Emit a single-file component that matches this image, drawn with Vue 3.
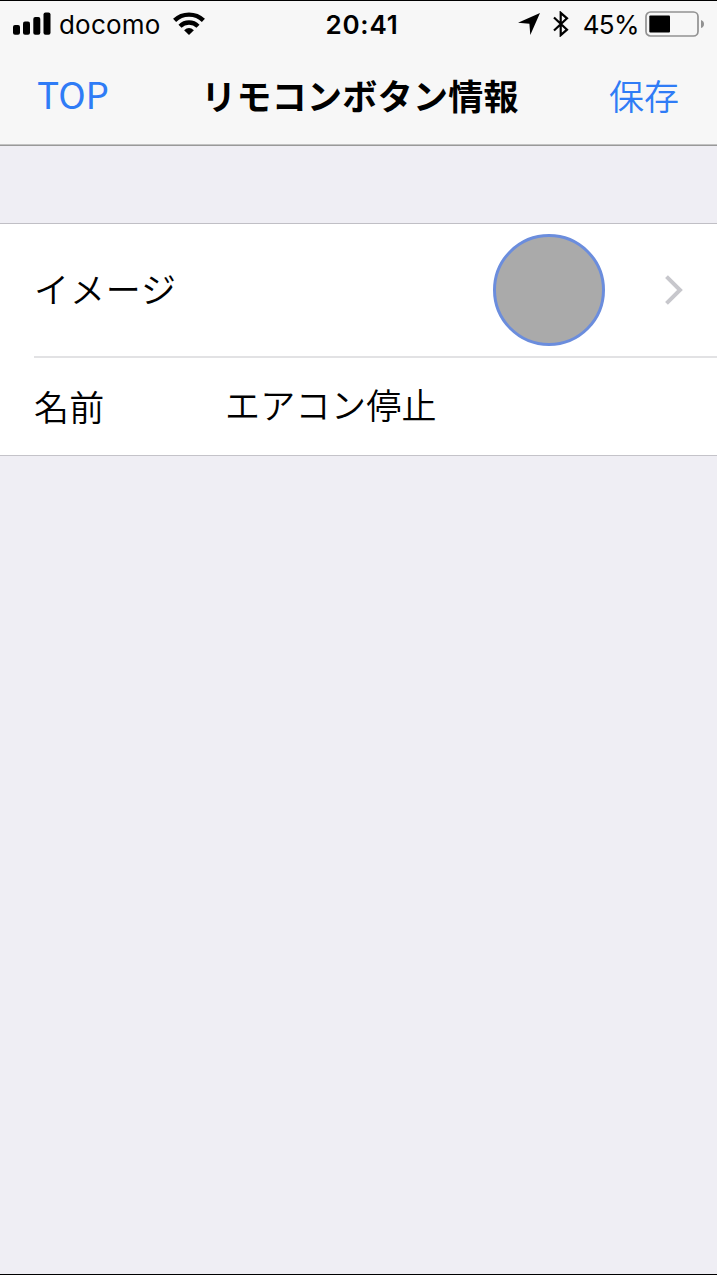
<script setup>
const carrier = 'docomo'
const time = '20:41'
const battery = 45
const title = 'リモコンボタン情報'
const name = 'エアコン停止'
</script>

<template>
  <div class="screen">
    <header>
      <div class="status">
        <div class="side">
          <svg class="signal" width="38" height="24" viewBox="0 0 38 24">
            <rect x="0" y="13" width="7" height="9.8" rx="2" />
            <rect x="10" y="9.5" width="7" height="13.3" rx="2" />
            <rect x="20.3" y="5" width="7" height="17.8" rx="2" />
            <rect x="30.5" y="0.5" width="7" height="22.3" rx="2" />
          </svg>
          <span class="carrier">{{ carrier }}</span>
          <svg class="wifi" width="32" height="24" viewBox="0 0 32 24">
            <g fill="none" stroke="#000" stroke-width="4.4">
              <path d="M1.6 8.4C9.5 0.7 22.5 0.7 30.4 8.4" />
              <path d="M7 14.2C12 9.3 20 9.3 25 14.2" />
            </g>
            <path d="M11.1 18.2Q16 14 20.9 18.2L16 23.1Z" />
          </svg>
        </div>
        <span class="time">{{ time }}</span>
        <div class="side right">
          <svg class="location" width="22" height="22" viewBox="0 0 22 22">
            <path d="M22 0L12.3 22L11.4 10.7L0 9.8Z" />
          </svg>
          <svg class="bluetooth" width="16" height="26" viewBox="0 0 16 26">
            <path d="M1 6.5L14 18.7L7.7 24.2V1.8L14 7.3L1 19.5" fill="none" stroke="#000" stroke-width="2.2" />
          </svg>
          <span class="percent">{{ battery }}%</span>
          <svg class="battery" width="60" height="26" viewBox="0 0 60 26">
            <rect x="1" y="1" width="52" height="24" rx="4.5" fill="none" stroke="#929292" stroke-width="1.7" />
            <rect x="4.3" y="4.5" width="20.7" height="17" rx="1" />
            <path d="M56 9Q59 10 59 13T56 17Z" fill="#929292" />
          </svg>
        </div>
      </div>
      <nav>
        <a class="top">TOP</a>
        <h1>{{ title }}</h1>
        <a class="save">保存</a>
      </nav>
    </header>

    <main>
      <div class="row image-row">
        <span class="label">イメージ</span>
        <div class="preview"></div>
        <svg class="chevron" width="18" height="30" viewBox="0 0 18 30">
          <path d="M1.5 1.6L15 15L1.5 28.4" fill="none" stroke="#c7c7cc" stroke-width="4" />
        </svg>
      </div>
      <div class="row name-row">
        <span class="label">名前</span>
        <span class="value">{{ name }}</span>
      </div>
    </main>
  </div>
</template>

<style>
body {
  background: #efeef4;
}
</style>

<style scoped>
.screen {
  box-sizing: border-box;
  height: 1275px;
  border-top: 1px solid #000;
  border-bottom: 1px solid #000;
  background: #efeef4;
  color: #000;
  font-family: Inter, "Noto Sans CJK JP", sans-serif;
  overflow: hidden;
}
svg {
  display: block;
  flex: none;
}
header {
  box-sizing: border-box;
  height: 145px;
  background: #f7f7f7;
  border-bottom: 1px solid #999;
  box-shadow: inset 0 -1px #c2c2c2;
}
.status {
  height: 46px;
  display: grid;
  grid-template-columns: 1fr auto 1fr;
  align-items: center;
}
.side {
  display: flex;
  align-items: center;
  padding-left: 13px;
}
.right {
  justify-content: flex-end;
  padding: 0 12px 0 0;
}
.carrier {
  margin-left: 8px;
  font-size: 26px;
  letter-spacing: 0.2px;
}
.wifi {
  margin-left: 12px;
}
.time {
  padding-left: 7px;
  font-size: 26px;
  font-weight: 600;
  letter-spacing: 0.8px;
}
.bluetooth {
  margin-left: 13px;
}
.percent {
  margin: 0 6px 0 14px;
  font-size: 26px;
  letter-spacing: -0.6px;
}
nav {
  height: 97px;
  display: grid;
  grid-template-columns: 1fr auto 1fr;
  align-items: center;
  padding: 0 38px 0 37px;
}
.top,
.save {
  color: #2f7cf6;
  font-size: 35px;
}
.top {
  padding-bottom: 5px;
  font-family: "Noto Sans CJK JP", sans-serif;
  font-size: 37px;
}
.save {
  padding-bottom: 2px;
  text-align: right;
  font-weight: 350;
}
h1 {
  margin: 0;
  padding: 0 0 3px 4px;
  font-size: 35px;
  font-weight: 700;
  letter-spacing: 0.3px;
}
main {
  margin-top: 77px;
  background: #fff;
  border-top: 1px solid #c0bfc5;
  border-bottom: 1px solid #c4c3c9;
}
.row {
  display: flex;
  align-items: center;
  margin-left: 34px;
  font-size: 35px;
  font-weight: 350;
  letter-spacing: 0.3px;
}
.image-row {
  height: 132px;
  border-bottom: 2px solid #e2e2e4;
}
.image-row .label {
  padding-bottom: 5px;
  letter-spacing: 0.9px;
}
.name-row {
  height: 97px;
}
.name-row .label {
  padding-bottom: 3px;
}
.value {
  padding-bottom: 7px;
}
.label {
  width: 191px;
}
.preview {
  box-sizing: border-box;
  width: 112px;
  height: 112px;
  margin-left: 268px;
  border: 3px solid #6b8ddd;
  border-radius: 50%;
  background: #aaa;
}
.chevron {
  margin-left: 60px;
}
</style>
